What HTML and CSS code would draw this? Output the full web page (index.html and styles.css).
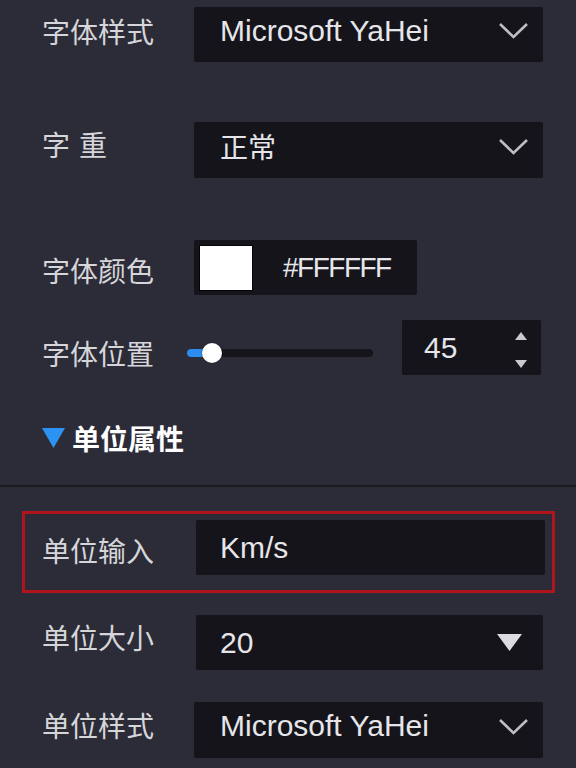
FILE: index.html
```html
<!DOCTYPE html>
<html lang="zh">
<head>
<meta charset="utf-8">
<title>单位属性</title>
<link rel="stylesheet" href="styles.css">
</head>
<body>
<div class="panel">
  <div class="row r1">
    <div class="label lift4">字体样式</div>
    <div class="box dd w349 pl26">
      <span class="val">Microsoft YaHei</span>
      <svg class="chev" width="31" height="17" viewBox="0 0 31 17"><polyline points="2,2 15.5,15 29,2" fill="none" stroke="#bdbdc2" stroke-width="2.6"/></svg>
    </div>
  </div>

  <div class="row r2">
    <div class="label lift6">字<span class="sp"></span>重</div>
    <div class="box dd w349 pl26">
      <span class="val cjk">正常</span>
      <svg class="chev" width="31" height="17" viewBox="0 0 31 17"><polyline points="2,2 15.5,15 29,2" fill="none" stroke="#bdbdc2" stroke-width="2.6"/></svg>
    </div>
  </div>

  <div class="row r3">
    <div class="label drop5">字体颜色</div>
    <div class="box color">
      <span class="swatch"></span>
      <span class="val hex">#FFFFFF</span>
    </div>
  </div>

  <div class="row r4">
    <div class="label short drop11">字体位置</div>
    <div class="slider">
      <span class="fill"></span>
      <span class="knob"></span>
    </div>
    <div class="box num">
      <span class="val">45</span>
      <span class="spin">
        <svg width="12" height="8" viewBox="0 0 12 8"><polygon points="6,0 12,8 0,8" fill="#c9c9ce"/></svg>
        <svg width="12" height="8" viewBox="0 0 12 8"><polygon points="0,0 12,0 6,8" fill="#c9c9ce"/></svg>
      </span>
    </div>
  </div>

  <div class="row head">
    <svg class="tri" width="23" height="20" viewBox="0 0 23 20"><polygon points="0,0 23,0 11.5,20" fill="#2d93f2"/></svg>
    <span class="head-text">单位属性</span>
  </div>
</div>

<div class="divider"></div>

<div class="highlight">
  <div class="row inner">
    <div class="label wide drop5">单位输入</div>
    <div class="box w349 pl24">
      <span class="val">Km/s</span>
    </div>
  </div>
</div>

<div class="panel">
  <div class="row r6">
    <div class="label wide lift6">单位大小</div>
    <div class="box w347 pl24 sel-solid">
      <span class="val">20</span>
      <svg width="25" height="17" viewBox="0 0 25 17"><polygon points="0,0 25,0 12.5,17" fill="#dcdce0"/></svg>
    </div>
  </div>

  <div class="row r7">
    <div class="label lift5">单位样式</div>
    <div class="box dd w349 pl26">
      <span class="val">Microsoft YaHei</span>
      <svg class="chev" width="31" height="17" viewBox="0 0 31 17"><polyline points="2,2 15.5,15 29,2" fill="none" stroke="#bdbdc2" stroke-width="2.6"/></svg>
    </div>
  </div>
</div>
</body>
</html>
```

FILE: styles.css
```css
* { box-sizing: border-box; }

html, body {
  margin: 0;
  padding: 0;
}

body {
  width: 576px;
  height: 768px;
  overflow: hidden;
  background: #2c2c38;
  font-family: "Noto Sans CJK SC", "Liberation Sans", sans-serif;
  color: #d6d6da;
}

.panel {
  display: flex;
  flex-direction: column;
}

.row {
  display: flex;
  align-items: center;
  padding-left: 42px;
}

.r1 { margin-top: 7px; height: 55px; }
.r2 { margin-top: 60px; height: 56px; }
.r3 { margin-top: 62px; height: 55px; }
.r4 { margin-top: 25px; height: 55px; }
.head { margin-top: 47px; height: 32px; }
.r6 { margin-top: 22px; height: 55px; }
.r7 { margin-top: 32px; height: 56px; }

.label {
  flex: none;
  width: 152px;
  font-size: 28px;
  line-height: 32px;
  color: #d6d6da;
  white-space: nowrap;
}

.label.wide { width: 154px; }
.label.short { width: 145px; }

.lift4 { margin-bottom: 8px; }
.lift5 { margin-bottom: 10px; }
.lift6 { margin-bottom: 12px; }
.drop5 { margin-top: 5px; }
.drop11 { margin-top: 11px; }

.sp {
  display: inline-block;
  width: 9px;
}

.box {
  height: 100%;
  background: #14141a;
  border-radius: 2px;
  display: flex;
  align-items: center;
}

.w349 { width: 349px; }
.w347 { width: 347px; }
.pl26 { padding-left: 26px; }
.pl24 { padding-left: 24px; }

.dd {
  justify-content: space-between;
  padding-right: 14px;
  padding-bottom: 8px;
}

.sel-solid {
  justify-content: space-between;
  padding-right: 21px;
}

.val {
  font-family: "Liberation Sans", "Noto Sans CJK SC", sans-serif;
  font-size: 30px;
  line-height: 34px;
  color: #e6e6ea;
  white-space: nowrap;
}

.val.cjk {
  font-family: "Noto Sans CJK SC", sans-serif;
  font-size: 28px;
}

.chev { flex: none; }

/* colour picker */
.color {
  width: 223px;
  padding-left: 5px;
}

.swatch {
  flex: none;
  width: 54px;
  height: 46px;
  background: #ffffff;
  border: 1px solid #050507;
}

.val.hex {
  margin-left: 30px;
  font-size: 28px;
  letter-spacing: -1.5px;
}

/* slider */
.slider {
  flex: none;
  position: relative;
  width: 186px;
  height: 8px;
  border-radius: 4px;
  background: #15151b;
  margin-top: 11px;
}

.fill {
  position: absolute;
  left: 0;
  top: 0;
  width: 22px;
  height: 8px;
  border-radius: 4px;
  background: #2d8cf0;
}

.knob {
  position: absolute;
  left: 15px;
  top: -6px;
  width: 20px;
  height: 20px;
  border-radius: 50%;
  background: #ffffff;
  box-shadow: 0 0 2px rgba(0, 0, 0, 0.5);
}

/* number input */
.num {
  margin-left: 29px;
  width: 139px;
  justify-content: space-between;
  padding-left: 22px;
  padding-right: 14px;
}

.spin {
  height: 100%;
  display: flex;
  flex-direction: column;
  justify-content: space-between;
  padding: 12px 0 7px;
}

.spin svg { display: block; }

/* section header */
.tri {
  flex: none;
  margin-right: 7px;
}

.head-text {
  font-size: 28px;
  line-height: 32px;
  font-weight: 700;
  color: #ffffff;
}

.divider {
  margin-top: 31px;
  height: 2px;
  background: #1b1b21;
}

/* highlighted row */
.highlight {
  margin: 24px 0 0 22px;
  width: 533px;
  height: 82px;
  border: 3px solid #b0141c;
  padding: 6px 7px 0 17px;
}

.inner {
  height: 55px;
  padding-left: 0;
}
```
